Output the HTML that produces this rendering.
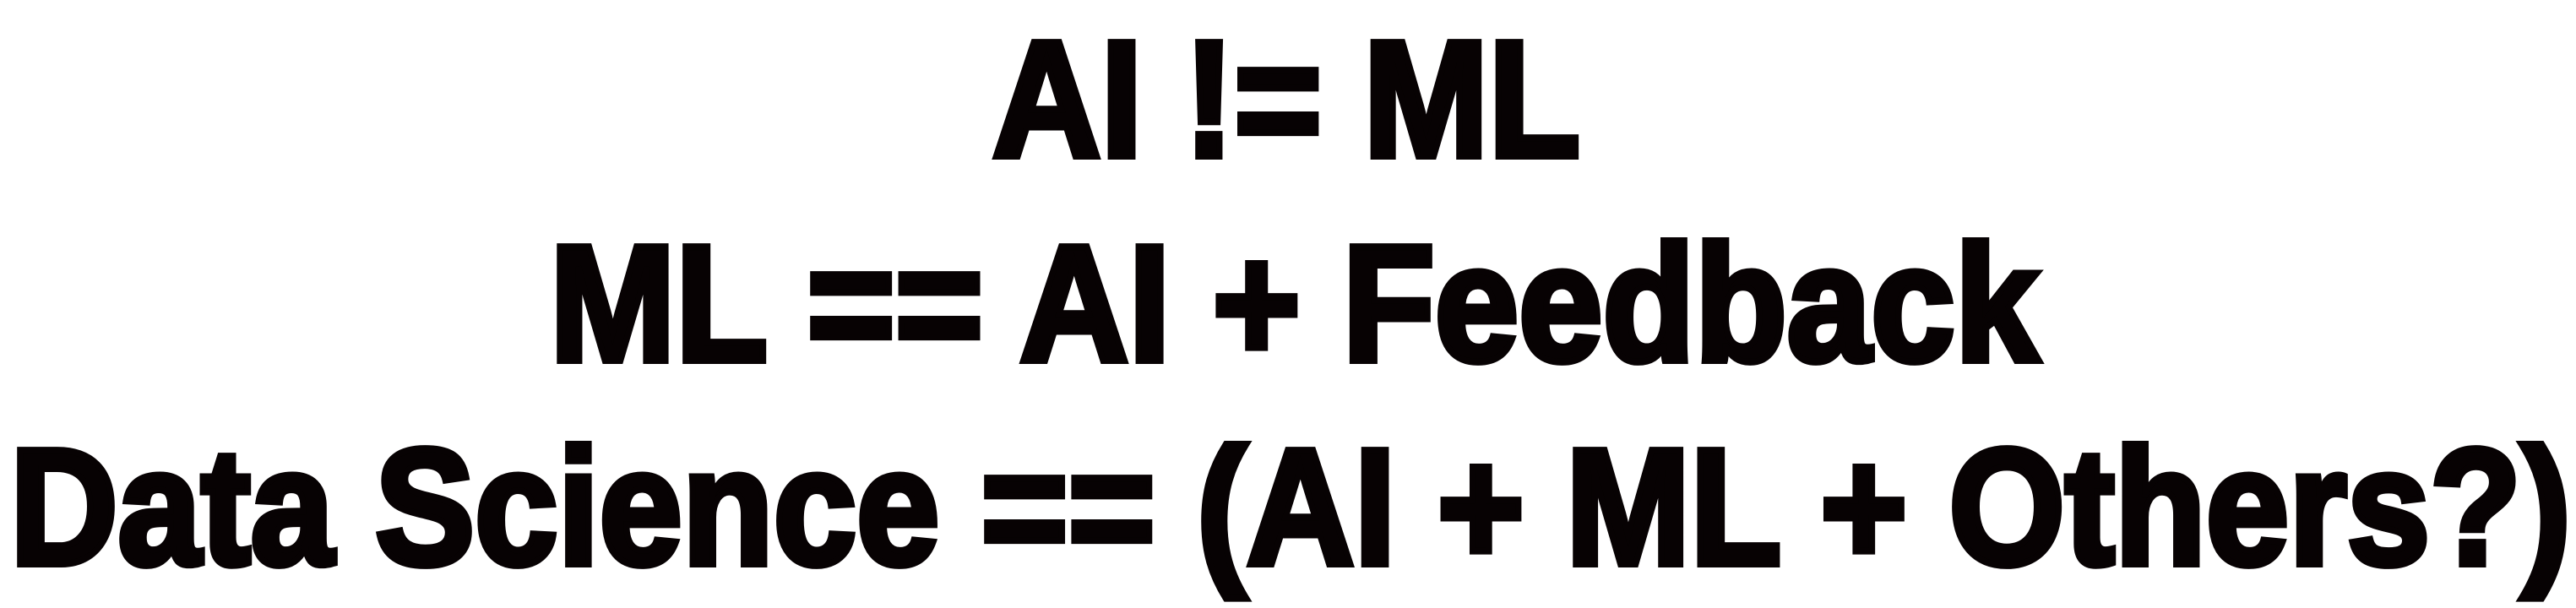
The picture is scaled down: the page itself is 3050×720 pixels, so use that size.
<!DOCTYPE html>
<html><head><meta charset="utf-8"><style>
html,body{margin:0;padding:0;background:#fff;width:3050px;height:720px;overflow:hidden}
svg{display:block}
text{font-family:"Liberation Sans",sans-serif;font-weight:bold;font-size:196px;fill:#070203;stroke:#070203;stroke-width:8px;stroke-linejoin:miter}
</style></head><body>
<svg width="3050" height="720" viewBox="0 0 3050 720" xmlns="http://www.w3.org/2000/svg">
<text x="1175" y="185" textLength="696" lengthAdjust="spacingAndGlyphs">AI != ML</text>
<text x="651" y="427" textLength="1763" lengthAdjust="spacingAndGlyphs">ML == AI + Feedback</text>
<text x="12" y="668" textLength="3032" lengthAdjust="spacingAndGlyphs">Data Science == (AI + ML + Others?)</text>
</svg>
</body></html>
